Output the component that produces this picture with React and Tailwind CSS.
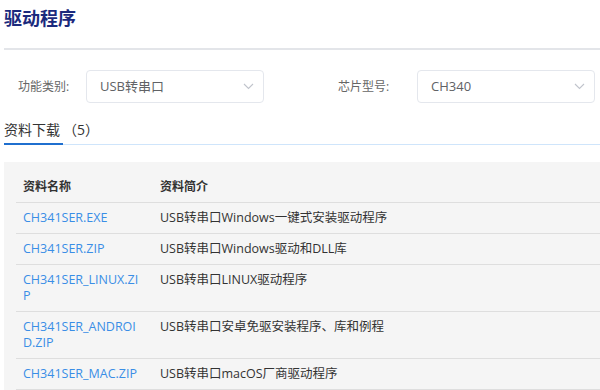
import React from "react";

const rows = [
  ["CH341SER.EXE", "USB转串口Windows一键式安装驱动程序"],
  ["CH341SER.ZIP", "USB转串口Windows驱动和DLL库"],
  ["CH341SER_LINUX.ZIP", "USB转串口LINUX驱动程序"],
  ["CH341SER_ANDROID.ZIP", "USB转串口安卓免驱安装程序、库和例程"],
  ["CH341SER_MAC.ZIP", "USB转串口macOS厂商驱动程序"],
];

function Chevron() {
  return (
    <svg width="11" height="7" viewBox="0 0 11 7" fill="none" className="shrink-0">
      <path d="M1 1l4.5 4.5L10 1" stroke="#c0c4cc" strokeWidth="1.1" />
    </svg>
  );
}

function Select({ value }) {
  return (
    <div className="flex h-[33px] w-[178px] items-center justify-between rounded-[4px] border border-[#e4e7ed] bg-white pl-[13px] pr-[9px] text-[13px] text-[#606266]">
      <span>{value}</span>
      <Chevron />
    </div>
  );
}

export default function App() {
  return (
    <div
      className="h-[390px] w-[600px] overflow-hidden bg-white pl-[4px]"
      style={{ fontFamily: '"Open Sans", "Noto Sans CJK SC", sans-serif' }}
    >
      <h1 className="pt-[5px] text-[18px] leading-[26px] font-bold text-[#1b2a7d]">驱动程序</h1>
      <div className="mt-[17px] h-[2px] bg-[#e3e5e9]" />
      <div className="mt-[20px] flex items-center">
        <div className="flex items-center">
          <span className="w-[82px] pl-[14px] text-[12px] text-[#666]">功能类别:</span>
          <Select value="USB转串口" />
        </div>
        <div className="ml-[71px] flex items-center">
          <span className="w-[82px] pl-[3px] text-[12px] text-[#666]">芯片型号:</span>
          <Select value="CH340" />
        </div>
      </div>
      <div className="mt-[17px] flex items-end border-b border-[#cfe5fb] text-[14px] leading-[20px] text-[#333]">
        <div className="-mb-[1px] border-b-2 border-[#1f6fcf] pb-[3px] pr-[3px]">资料下载</div>
        <div className="pb-[4px]">（5）</div>
      </div>
      <div className="mt-[17px] bg-[#f5f5f5] pl-[12px] pt-[10px] pb-[20px]">
        <table className="w-full border-collapse text-[12.5px] leading-[16px]">
          <thead>
            <tr className="border-b border-[#dedede]">
              <th className="w-[137px] py-[7px] pl-[7px] pr-[12px] text-left text-[12px] font-semibold text-[#333]">资料名称</th>
              <th className="px-[7px] py-[7px] text-left text-[12px] font-semibold text-[#333]">资料简介</th>
            </tr>
          </thead>
          <tbody>
            {rows.map(([n, d]) => (
              <tr key={n} className="border-b border-[#dedede] align-top">
                <td className="w-[137px] py-[7px] pl-[7px] pr-[12px] break-all text-[#3a8ee6]">{n}</td>
                <td className="px-[7px] py-[7px] text-[#333]">{d}</td>
              </tr>
            ))}
          </tbody>
        </table>
      </div>
    </div>
  );
}
